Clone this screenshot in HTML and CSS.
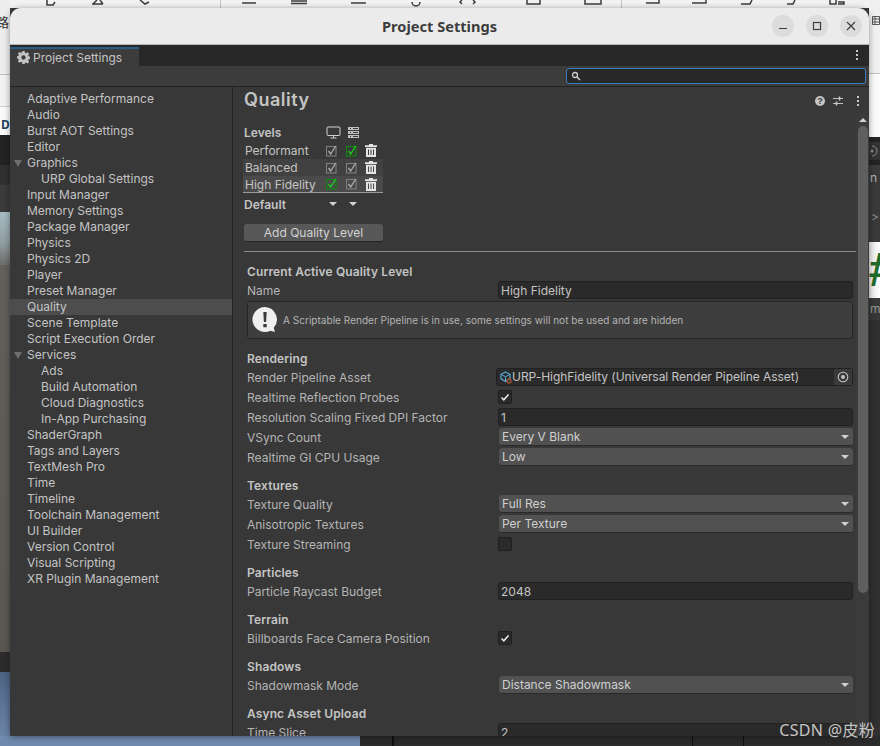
FILE: index.html
```html
<!DOCTYPE html>
<html lang="en">
<head>
<meta charset="utf-8">
<title>Project Settings</title>
<link rel="stylesheet" href="styles.css">
</head>
<body>
<div class="desktop">
  <div class="bg-top">
    <svg width="880" height="8" viewBox="0 0 880 8"><path fill="none" stroke="#3c3c3c" stroke-width="1.500" d="M47 0v5h6l2-3M92 4h11M97 0l-4 4M100 0l3 4M140 0l5 4 4-2M242 3h14M291 1h16M291 3.500h16M351 3h15M412 2a2 2 0 0 0 8 0M462 0l-2 2 2 2M473 0l2 2-2 2M527 0v4h13v-4M585 0v4h16v-4M646 3h13v-3M692 3h14v-3M741 4h9l2-4M787 4h6l2-4M830 0v4h6v-4M838 2h6v2h-6"/><path stroke="#c4c4c4" d="M220.500 0v8M621.500 0v8"/></svg>
  </div>
  <div class="bg-left">
    <div class="sl s1"><span class="frag">路</span></div>
    <div class="sl s2"></div>
    <div class="sl s3"><span class="frag-d">D</span></div>
    <div class="sl s4"></div>
    <div class="sl s5"></div>
    <div class="sl s6"></div>
    <div class="sl s7"></div>
    <div class="sl s8"></div>
    <div class="sl s9"></div>
    <div class="sl s10"></div>
  </div>
  <div class="bg-right">
    <div class="sr r1"><svg class="r-list" width="8" height="12" viewBox="0 0 8 12"><path fill="none" stroke="#555" d="M.5 2.500h7v8h-7zM.5 5h7M.5 8h7M3 2.500v8"/></svg></div>
    <div class="sr r2"></div>
    <div class="sr r3"></div>
    <div class="sr r4"><svg width="9" height="12" viewBox="0 0 9 12"><path fill="none" stroke="#8a8a8a" d="M2 1a5 5 0 0 1 0 10"/><circle cx="2" cy="6" r="1.500" fill="#8a8a8a"/></svg></div>
    <div class="sr r5"></div>
    <div class="sr r6"><span>n c</span></div>
    <div class="sr r7"><span class="chev">&gt;</span></div>
    <div class="sr r8"><span class="hash">#</span></div>
    <div class="sr r9"><span>m-</span></div>
    <div class="sr r10"></div>
  </div>
  <div class="bg-bottom"></div>
  <main class="window">
    <header class="titlebar">
      <h1 class="title">Project Settings</h1>
      <div class="wm">
        <button class="wm-btn"><svg width="12" height="12" viewBox="0 0 12 12"><path d="M2 8.500h8" stroke="#3d3d3d" stroke-width="1.200"/></svg></button>
        <button class="wm-btn"><svg width="12" height="12" viewBox="0 0 12 12"><rect x="2.500" y="2.500" width="7" height="7" fill="none" stroke="#3d3d3d" stroke-width="1.200"/></svg></button>
        <button class="wm-btn"><svg width="12" height="12" viewBox="0 0 12 12"><path d="M2 2l8 8M10 2l-8 8" stroke="#3d3d3d" stroke-width="1.200"/></svg></button>
      </div>
    </header>
    <div class="tabstrip">
      <div class="tab">
        <svg class="gear" width="13" height="13" viewBox="0 0 24 24"><path fill="#c4c4c4" fill-rule="evenodd" d="M10 0h4l.7 3.200 2 .8 2.800-1.700 2.800 2.800-1.700 2.800.8 2 3.200.7v4l-3.200.7-.8 2 1.700 2.800-2.800 2.800-2.800-1.700-2 .8L14 24h-4l-.7-3.200-2-.8-2.800 1.700-2.800-2.800 1.700-2.800-.8-2L-.6 14v-4l3.200-.7.800-2L1.700 4.500l2.800-2.800 2.800 1.700 2-.8L10 0zm2 8a4 4 0 1 0 0 8 4 4 0 0 0 0-8z"/></svg>
        <span>Project Settings</span>
      </div>
      <span class="kebab tab-kebab"><i></i><i></i><i></i></span>
    </div>
    <div class="toolbar">
      <div class="search">
        <svg width="10" height="10" viewBox="0 0 10 10"><circle cx="4" cy="4" r="2.500" fill="none" stroke="#d0d0d0" stroke-width="1.300"/><path d="M6 6l3 3" stroke="#d0d0d0" stroke-width="1.500"/></svg>
      </div>
    </div>
    <div class="body">
      <nav class="sidebar">
        <div class="nav-item">Adaptive Performance</div>
        <div class="nav-item">Audio</div>
        <div class="nav-item">Burst AOT Settings</div>
        <div class="nav-item">Editor</div>
        <div class="nav-item has-arrow">Graphics</div>
        <div class="nav-item sub">URP Global Settings</div>
        <div class="nav-item">Input Manager</div>
        <div class="nav-item">Memory Settings</div>
        <div class="nav-item">Package Manager</div>
        <div class="nav-item">Physics</div>
        <div class="nav-item">Physics 2D</div>
        <div class="nav-item">Player</div>
        <div class="nav-item">Preset Manager</div>
        <div class="nav-item selected">Quality</div>
        <div class="nav-item">Scene Template</div>
        <div class="nav-item">Script Execution Order</div>
        <div class="nav-item has-arrow">Services</div>
        <div class="nav-item sub">Ads</div>
        <div class="nav-item sub">Build Automation</div>
        <div class="nav-item sub">Cloud Diagnostics</div>
        <div class="nav-item sub">In-App Purchasing</div>
        <div class="nav-item">ShaderGraph</div>
        <div class="nav-item">Tags and Layers</div>
        <div class="nav-item">TextMesh Pro</div>
        <div class="nav-item">Time</div>
        <div class="nav-item">Timeline</div>
        <div class="nav-item">Toolchain Management</div>
        <div class="nav-item">UI Builder</div>
        <div class="nav-item">Version Control</div>
        <div class="nav-item">Visual Scripting</div>
        <div class="nav-item">XR Plugin Management</div>
      </nav>
      <section class="panel">
        <div class="panel-head">
          <h2 class="panel-title">Quality</h2>
          <div class="panel-tools">
            <svg width="12" height="12" viewBox="0 0 12 12"><circle cx="6" cy="6" r="5" fill="#c4c4c4"/><text x="6" y="9" text-anchor="middle" class="help-q">?</text></svg>
            <svg width="12" height="12" viewBox="0 0 12 12"><path d="M1 3.500h10M1 8.500h10" stroke="#c4c4c4" stroke-width="1.200"/><path d="M7.500 1.500v4M4.500 6.500v4" stroke="#c4c4c4" stroke-width="1.600"/></svg>
            <span class="kebab tools-kebab"><i></i><i></i><i></i></span>
          </div>
        </div>
        <div class="levels">
          <div class="lv-head">
            <span class="lv-label strong">Levels</span>
            <svg class="lv-ico" width="15" height="13" viewBox="0 0 15 13"><rect x="1" y="1" width="13" height="8.500" rx="1" fill="none" stroke="#d2d2d2"/><path d="M7.500 9.500v2M4.500 12h6" stroke="#d2d2d2"/></svg>
            <svg class="lv-ico" width="13" height="13" viewBox="0 0 13 13"><path fill="#c0c0c0" d="M1 1h11v3H1zM1 5h11v3H1zM1 9h11v3H1z"/><path stroke="#383838" d="M3 2.500h1M3 6.500h1M3 10.500h1M6 2.500h5M6 6.500h5M6 10.500h5"/></svg>
          </div>
          <div class="lv-row">
            <span class="lv-name">Performant</span>
            <span class="lv-check"><svg width="12" height="12" viewBox="0 0 12 12"><rect x=".5" y="1.500" width="9.500" height="9.500" fill="none" stroke="#7f7f7f" stroke-width="1.100"/><path d="M2.500 6l2.200 3 5-8" fill="none" stroke="#a8a8a8" stroke-width="1.400"/></svg></span>
            <span class="lv-check"><svg width="12" height="12" viewBox="0 0 12 12"><rect x=".5" y="1.500" width="9.500" height="9.500" fill="none" stroke="#0e8a0e" stroke-width="1.100"/><path d="M2.500 6l2.200 3 5-8" fill="none" stroke="#1fc61f" stroke-width="1.400"/></svg></span>
            <svg class="trash" width="12" height="13" viewBox="0 0 12 13"><path fill="#e4e4e4" d="M4 0h4v1.300h4v1.700H0V1.300h4zM1 3.700h10V13H1z"/><path stroke="#383838" d="M3.500 5.500v5.500M6 5.500v5.500M8.500 5.500v5.500"/></svg>
          </div>
          <div class="lv-row alt">
            <span class="lv-name">Balanced</span>
            <span class="lv-check"><svg width="12" height="12" viewBox="0 0 12 12"><rect x=".5" y="1.500" width="9.500" height="9.500" fill="none" stroke="#7f7f7f" stroke-width="1.100"/><path d="M2.500 6l2.200 3 5-8" fill="none" stroke="#a8a8a8" stroke-width="1.400"/></svg></span>
            <span class="lv-check"><svg width="12" height="12" viewBox="0 0 12 12"><rect x=".5" y="1.500" width="9.500" height="9.500" fill="none" stroke="#7f7f7f" stroke-width="1.100"/><path d="M2.500 6l2.200 3 5-8" fill="none" stroke="#a8a8a8" stroke-width="1.400"/></svg></span>
            <svg class="trash" width="12" height="13" viewBox="0 0 12 13"><path fill="#e4e4e4" d="M4 0h4v1.300h4v1.700H0V1.300h4zM1 3.700h10V13H1z"/><path stroke="#414141" d="M3.500 5.500v5.500M6 5.500v5.500M8.500 5.500v5.500"/></svg>
          </div>
          <div class="lv-row current">
            <span class="lv-name">High Fidelity</span>
            <span class="lv-check"><svg width="12" height="12" viewBox="0 0 12 12"><rect x=".5" y="1.500" width="9.500" height="9.500" fill="none" stroke="#0e8a0e" stroke-width="1.100"/><path d="M2.500 6l2.200 3 5-8" fill="none" stroke="#1fc61f" stroke-width="1.400"/></svg></span>
            <span class="lv-check"><svg width="12" height="12" viewBox="0 0 12 12"><rect x=".5" y="1.500" width="9.500" height="9.500" fill="none" stroke="#7f7f7f" stroke-width="1.100"/><path d="M2.500 6l2.200 3 5-8" fill="none" stroke="#a8a8a8" stroke-width="1.400"/></svg></span>
            <svg class="trash" width="12" height="13" viewBox="0 0 12 13"><path fill="#e4e4e4" d="M4 0h4v1.300h4v1.700H0V1.300h4zM1 3.700h10V13H1z"/><path stroke="#4a4a4a" d="M3.500 5.500v5.500M6 5.500v5.500M8.500 5.500v5.500"/></svg>
          </div>
          <div class="lv-default">
            <span class="lv-label strong">Default</span>
            <span class="lv-tri"></span>
            <span class="lv-tri"></span>
          </div>
          <button class="add-btn">Add Quality Level</button>
        </div>
        <hr class="rule">
        <div class="form">
          <h3 class="group g-first">Current Active Quality Level</h3>
          <div class="row"><label>Name</label><div class="input">High Fidelity</div></div>
          <div class="help-box">
            <svg width="30" height="30" viewBox="0 0 30 30"><path fill="#efefef" d="M15 2a12.500 12.500 0 1 0 5.500 23.700L25 27l-1.300-4.200A12.500 12.500 0 0 0 15 2z"/><path fill="#3a3a3a" d="M13.300 7h3.400l-.6 10h-2.200zM13.300 19h3.400v3.200h-3.400z"/></svg>
            <span>A Scriptable Render Pipeline is in use, some settings will not be used and are hidden</span>
          </div>
          <h3 class="group">Rendering</h3>
          <div class="row"><label>Render Pipeline Asset</label>
            <div class="input object">
              <svg width="12" height="13" viewBox="0 0 12 13"><path d="M5.500 1l4.500 2.300v4.500L5.500 10.500 1 7.800V3.300z" fill="none" stroke="#5aa9d6" stroke-width="1.200"/><path d="M1 3.300l4.500 2.500L10 3.300M5.500 5.800v4.700" fill="none" stroke="#5aa9d6"/><circle cx="9" cy="10" r="2.200" fill="#3a3a3a" stroke="#d8602c"/></svg>
              <span class="obj-text">URP-HighFidelity (Universal Render Pipeline Asset)</span>
              <span class="obj-pick"><svg width="12" height="12" viewBox="0 0 12 12"><circle cx="6" cy="6" r="4.800" fill="none" stroke="#c4c4c4" stroke-width="1.100"/><circle cx="6" cy="6" r="2" fill="#c4c4c4"/></svg></span>
            </div>
          </div>
          <div class="row"><label>Realtime Reflection Probes</label><span class="check on"><svg width="10" height="10" viewBox="0 0 10 10"><path d="M1.500 5.500l2.300 2.300 4.700-5.300" fill="none" stroke="#eee" stroke-width="1.500"/></svg></span></div>
          <div class="row"><label>Resolution Scaling Fixed DPI Factor</label><div class="input">1</div></div>
          <div class="row"><label>VSync Count</label><div class="select">Every V Blank</div></div>
          <div class="row"><label>Realtime GI CPU Usage</label><div class="select">Low</div></div>
          <h3 class="group">Textures</h3>
          <div class="row"><label>Texture Quality</label><div class="select">Full Res</div></div>
          <div class="row"><label>Anisotropic Textures</label><div class="select">Per Texture</div></div>
          <div class="row"><label>Texture Streaming</label><span class="check"></span></div>
          <h3 class="group">Particles</h3>
          <div class="row"><label>Particle Raycast Budget</label><div class="input">2048</div></div>
          <h3 class="group">Terrain</h3>
          <div class="row"><label>Billboards Face Camera Position</label><span class="check on"><svg width="10" height="10" viewBox="0 0 10 10"><path d="M1.500 5.500l2.300 2.300 4.700-5.300" fill="none" stroke="#eee" stroke-width="1.500"/></svg></span></div>
          <h3 class="group">Shadows</h3>
          <div class="row"><label>Shadowmask Mode</label><div class="select">Distance Shadowmask</div></div>
          <h3 class="group">Async Asset Upload</h3>
          <div class="row"><label>Time Slice</label><div class="input">2</div></div>
        </div>
        <div class="scrollbar"><span class="sb-up"></span><span class="sb-thumb"></span></div>
      </section>
    </div>
  </main>
  <div class="watermark">CSDN @皮粉</div>
</div>
</body>
</html>
```

FILE: styles.css
```css
* { box-sizing: border-box; }
html, body { margin: 0; padding: 0; }
body { width: 880px; height: 746px; overflow: hidden; font-family: Inter, "Noto Sans", sans-serif; }
.desktop { position: relative; width: 880px; height: 746px; background: #3a3a3a; overflow: hidden; }
.bg-top { position: absolute; left: 0; top: 0; width: 880px; height: 8px; background: #f2f2f2; line-height: 0; }

.bg-left { position: absolute; left: 0; top: 0; width: 10px; height: 746px; overflow: hidden; display: flex; flex-direction: column; }
.sl { flex: none; position: relative; overflow: hidden; }
.s1 { height: 75px; background: #ededed; border-bottom: 1px solid #bdbdbd; }
.s2 { height: 32px; background: #f2f2f2; border-bottom: 1px solid #cfcfcf; }
.s3 { height: 28px; background: #fafafa; }
.s4 { height: 30px; background: #232323; }
.s5 { height: 20px; background: #303030; }
.s6 { height: 27px; background: #3b3b3b; }
.s7 { height: 53px; background: linear-gradient(#a8bcc6, #8f9c9f 60%, #6d6c68); }
.s8 { height: 387px; background: linear-gradient(#62605b, #5a5751); }
.s9 { height: 20px; background: #2c2c2c; }
.s10 { height: 74px; background: linear-gradient(#4d6384, #6f89ad); }
.frag { position: absolute; left: -4px; top: 12px; font: 13px "Noto Sans CJK SC", sans-serif; color: #333; }
.frag-d { position: absolute; left: 1px; top: 9px; font: 700 12px "Noto Sans", sans-serif; color: #23405f; }

.bg-right { position: absolute; left: 869px; top: 0; width: 11px; height: 746px; overflow: hidden; display: flex; flex-direction: column; font: 12px Inter, sans-serif; color: #b4b4b4; }
.sr { flex: none; overflow: hidden; position: relative; padding-left: 1px; white-space: nowrap; }
.r1 { height: 74px; background: #f0f0f0; border-bottom: 1px solid #c4c4c4; }
.r-list { position: absolute; left: 3px; top: 14px; }
.r2 { height: 63px; background: #fafafa; }
.r3 { height: 5px; background: #232323; }
.r4 { height: 18px; background: #333; padding-top: 3px; }
.r5 { height: 5px; background: #232323; }
.r6 { height: 32px; background: #3a3a3a; line-height: 26px; }
.r7 { height: 45px; background: #3a3a3a; line-height: 40px; padding-left: 2px; }
.chev { color: #8a8a8a; }
.r8 { height: 56px; background: linear-gradient(90deg, #e4e4e4, #fff); }
.hash { position: absolute; left: -1px; top: -1px; font: italic 700 48px/58px "Liberation Sans", sans-serif; color: #1f6b2a; }
.r9 { height: 22px; background: #383838; line-height: 22px; color: #9a9a9a; }
.r10 { height: 426px; background: #303030; }

.bg-bottom { position: absolute; left: 0; bottom: 0; width: 880px; height: 10px;
  background: linear-gradient(90deg, #6f89ad 0, #6f89ad 360px, #2b2b2b 360px, #2b2b2b 392px, #111 392px, #111 394px, #2b2b2b 394px, #2b2b2b 692px, #111 692px, #111 693px, #2b2b2b 693px, #2b2b2b 743px, #111 743px, #111 744px, #2b2b2b 744px); }

.window { position: absolute; left: 10px; top: 8px; width: 859px; height: 728px; border-radius: 11px 11px 0 0;
  overflow: hidden; display: flex; flex-direction: column; background: #383838; box-shadow: 0 1px 6px rgba(0,0,0,.4); }

.titlebar { flex: 0 0 37px; height: 37px; background: #ebebeb; border-bottom: 1px solid #b5b5b5; position: relative;
  display: flex; align-items: center; justify-content: center; }
.title { margin: 0; font: 700 14.600px/1 "Noto Sans", "Open Sans", sans-serif; color: #3d3d3d; }
.wm { position: absolute; right: 7px; top: 7px; display: flex; gap: 12px; }
.wm-btn { width: 22px; height: 22px; border: 0; padding: 0; border-radius: 50%; background: #dcdcdc; display: flex; align-items: center; justify-content: center; }

.tabstrip { flex: 0 0 21px; height: 21px; padding-top: 2px; background: #282828; position: relative; display: flex; }
.tab { width: 129px; height: 19px; background: #3c3c3c; border-top: 2px solid #2c5d87; display: flex; align-items: center; gap: 3px; padding-left: 7px;
  font-size: 12px; color: #c4c4c4; }
.kebab { display: inline-flex; flex-direction: column; gap: 2px; width: 2px; }
.kebab i { display: block; width: 2px; height: 2px; background: #c8c8c8; }
.tab-kebab { position: absolute; right: 11px; top: 5px; }

.toolbar { flex: 0 0 21px; height: 21px; background: #3c3c3c; border-bottom: 1px solid #232323; display: flex; justify-content: flex-end; padding: 2px 3px 0 0; }
.search { width: 300px; height: 16px; background: #282828; border: 1px solid #3a79bb; border-radius: 3px; display: flex; align-items: center; padding-left: 4px; }

.body { flex: 1 1 auto; display: flex; min-height: 0; }
.sidebar { flex: 0 0 223px; width: 223px; border-right: 1px solid #232323; padding-top: 4px; background: #383838; }
.nav-item { height: 16px; line-height: 16px; padding-left: 17px; font-size: 12px; color: #c4c4c4; white-space: nowrap; position: relative; }
.nav-item.sub { padding-left: 31px; }
.nav-item.selected { background: #4d4d4d; }
.has-arrow::before { content: ""; position: absolute; left: 4px; top: 5px; border-left: 4.500px solid transparent; border-right: 4.500px solid transparent; border-top: 7px solid #6e6e6e; }

.panel { flex: 1 1 auto; position: relative; overflow: hidden; padding-left: 11px; }
.panel-head { height: 26px; display: flex; align-items: center; justify-content: space-between; padding-right: 10px; }
.panel-title { margin: 0; font-size: 18px; font-weight: 600; line-height: 26px; color: #c4c4c4; letter-spacing: .5px; }
.panel-tools { display: flex; align-items: center; gap: 6px; position: relative; top: 1px; }
.tools-kebab { margin-left: 7px; }
.help-q { font: 700 9px "Liberation Sans", sans-serif; fill: #383838; }

.levels { padding-top: 11px; }
.lv-head { display: flex; align-items: center; height: 16px; margin-bottom: 2px; }
.lv-label { width: 82px; font-size: 12px; color: #c4c4c4; }
.strong { font-weight: 600; }
.lv-ico { margin-right: 6px; }
.lv-row { width: 140px; height: 17px; margin-left: -1px; display: flex; align-items: center; font-size: 12px; color: #c4c4c4; }
.lv-row.alt { background: #414141; }
.lv-row.current { background: #4a4a4a; border-bottom: 1px solid #9a9a9a; }
.lv-name { width: 83px; padding-left: 2px; white-space: nowrap; }
.lv-check { width: 20px; display: flex; }
.trash { margin-left: -1px; }
.lv-default { height: 20px; margin-top: 1px; display: flex; align-items: center; }
.lv-default .lv-label { width: 85px; }
.lv-tri { width: 20px; height: 0; display: block; position: relative; }
.lv-tri::before { content: ""; position: absolute; left: 0; top: -2px; border-left: 4px solid transparent; border-right: 4px solid transparent; border-top: 4px solid #d0d0d0; }
.add-btn { display: block; margin-top: 10px; width: 139px; height: 18px; padding: 0; border: 0; border-bottom: 1px solid #232323; border-radius: 3px; background: #585858; color: #d2d2d2; font: 12px/17px Inter, sans-serif; }

.rule { width: 612px; height: 1px; margin: 9px 0 0 0; border: 0; background: #8a8a8a; }

.form { padding: 0 0 0 3px; width: 612px; }
.group { margin: 9px 0 0; height: 18px; font-size: 12px; line-height: 20px; font-weight: 600; color: #c4c4c4; letter-spacing: .12px; }
.g-first { margin-top: 10px; }
.row { display: flex; align-items: center; height: 20px; flex: none; font-size: 12px; color: #b4b4b4; }
.row label { flex: 0 0 251px; white-space: nowrap; }
.input { flex: none; width: 355px; height: 18px; background: #2a2a2a; border: 1px solid #212121; border-radius: 3px; padding-left: 2px; line-height: 18px; color: #c4c4c4; font-size: 12px; white-space: nowrap; }
.select { flex: none; width: 354px; margin-left: 1px; height: 18px; background: #515151; border-bottom: 1px solid #2a2a2a; border-radius: 3px; padding-left: 3px; line-height: 17px; color: #cfcfcf; position: relative; white-space: nowrap; }
.select::after { content: ""; position: absolute; right: 4px; top: 7px; border-left: 4px solid transparent; border-right: 4px solid transparent; border-top: 4px solid #d0d0d0; }
.check { width: 14px; height: 14px; border-radius: 2px; background: #2a2a2a; border: 1px solid #1f1f1f; display: flex; align-items: center; justify-content: center; }
.help-box { width: 606px; height: 38px; margin: 1px 0 10px; border: 1px solid #262626; border-radius: 3px; background: #3e3e3e; display: flex; align-items: center; gap: 3px; padding-left: 2px; font-size: 10px; color: #b4b4b4; white-space: nowrap; letter-spacing: .03px; }
.help-box + .group { margin-top: 0; }
.object { display: flex; align-items: center; gap: 0; padding-left: 3px; position: relative; margin-left: -2px; width: 357px; }
.obj-text { white-space: nowrap; letter-spacing: -.04px; }
.obj-pick { position: absolute; right: 0; top: 0; width: 18px; height: 16px; background: #3a3a3a; display: flex; align-items: center; justify-content: center; }

.scrollbar { position: absolute; right: 0; top: 26px; bottom: 0; width: 13px; background: #3b3b3b; }
.sb-up { position: absolute; left: 3px; top: 5px; border-left: 4px solid transparent; border-right: 4px solid transparent; border-bottom: 4px solid #d0d0d0; }
.sb-thumb { position: absolute; left: 2px; top: 13px; width: 10px; height: 467px; background: #5f5f5f; border-radius: 5px; }

.watermark { position: absolute; right: 5px; bottom: 5px; font: 16px "Noto Sans", "Noto Sans CJK SC", sans-serif; color: #c4c4c4; letter-spacing: .3px; }
```
